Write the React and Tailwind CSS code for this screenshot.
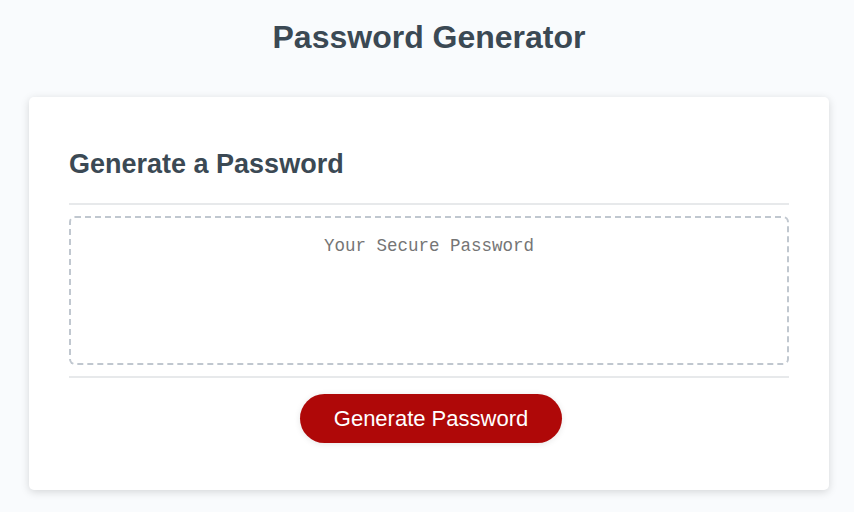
export default function App() {
  return (
    <div className="min-h-[512px] bg-[#f9fbfd] pl-6 pr-5 pt-[19px] text-[#3b4954]" style={{ fontFamily: '"Liberation Sans", Arial, sans-serif' }}>
      <header className="pb-[20px] text-center">
        <h1 className="m-0 text-[32px] font-bold leading-[37px] mb-[21px]">Password Generator</h1>
      </header>
      <div className="mx-auto max-w-[800px] rounded-[5px] bg-white px-10 pt-[30px] pb-[30px] shadow-[0_2px_8px_0_rgba(0,0,0,0.15)]">
        <div>
          <h2 className="pt-[22px] pb-[23px] text-[27px] font-bold leading-[31px]">Generate a Password</h2>
          <div className="h-[2px] w-full bg-[#e7e9eb]" />
        </div>
        <div>
          <div className="mb-[11px] mt-[11px] h-[149px] w-full rounded-[6px] border-2 border-dashed border-[#c0c7cf] px-[15px] pt-[17px] text-center text-[17.5px] leading-[22px] text-[#757575]" style={{ fontFamily: '"Liberation Mono", "DejaVu Sans Mono", monospace' }}>
            Your Secure Password
          </div>
        </div>
        <div className="text-center">
          <div className="h-[2px] w-full bg-[#e7e9eb]" />
          <button className="mb-[17px] ml-[20px] mr-[16px] mt-[16px] inline-block cursor-pointer rounded-[25px] bg-[#af0808] px-[34px] py-[14px] text-[22px] leading-[21px] text-white shadow-[0_1px_6px_0_rgba(0,0,0,0.1)]">
            Generate Password
          </button>
        </div>
      </div>
    </div>
  );
}
